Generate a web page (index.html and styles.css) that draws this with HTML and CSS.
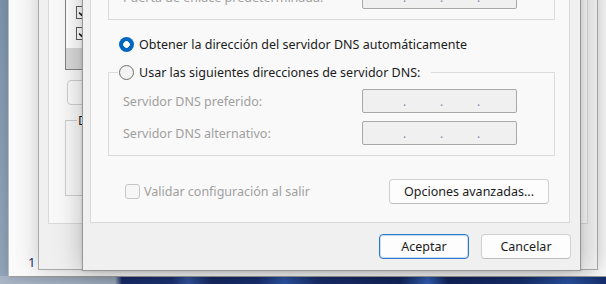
FILE: index.html
```html
<!DOCTYPE html>
<html lang="es">
<head>
<meta charset="utf-8">
<title>Propiedades</title>
<link rel="stylesheet" href="styles.css">
</head>
<body>
<div class="desktop">
  <div class="win win-back">
    <span class="page-num">1</span>
  </div>

  <div class="win win-mid">
    <div class="mid-tab">
      <div class="mid-list">
        <div class="mid-check"><svg width="11" height="11" viewBox="0 0 11 11"><path d="M2 5.5 L4.5 8 L9 2.5" fill="none" stroke="#1f1f1f" stroke-width="1.6"/></svg></div>
        <div class="mid-check"><svg width="11" height="11" viewBox="0 0 11 11"><path d="M2 5.5 L4.5 8 L9 2.5" fill="none" stroke="#1f1f1f" stroke-width="1.6"/></svg></div>
        <div class="mid-scroll"></div>
      </div>
      <div class="mid-btn"></div>
      <fieldset class="mid-group"><legend class="mid-legend">Descripción</legend></fieldset>
    </div>
  </div>

  <div class="win dialog">
    <div class="tabpage">
      <div class="group group-ip">
        <div class="field-row">
          <span class="label disabled">Puerta de enlace predeterminada:</span>
          <div class="ipbox"><span class="dot">.</span><span class="dot">.</span><span class="dot">.</span></div>
        </div>
      </div>

      <div class="radio-row">
        <span class="radio on"></span>
        <span class="radio-text">Obtener la dirección del servidor DNS automáticamente</span>
      </div>

      <fieldset class="group group-dns">
        <legend class="dns-legend">
          <span class="legend-inner">
            <span class="radio off"></span>
            <span class="radio-text">Usar las siguientes direcciones de servidor DNS:</span>
          </span>
        </legend>
        <div class="dns-rows">
          <div class="field-row">
            <span class="label disabled">Servidor DNS preferido:</span>
            <div class="ipbox"><span class="dot">.</span><span class="dot">.</span><span class="dot">.</span></div>
          </div>
          <div class="field-row">
            <span class="label disabled">Servidor DNS alternativo:</span>
            <div class="ipbox"><span class="dot">.</span><span class="dot">.</span><span class="dot">.</span></div>
          </div>
        </div>
      </fieldset>

      <div class="bottom-row">
        <span class="check"></span>
        <span class="label disabled">Validar configuración al salir</span>
        <button class="btn btn-adv" type="button">Opciones avanzadas...</button>
      </div>
    </div>

    <div class="dlg-buttons">
      <button class="btn btn-default" type="button">Aceptar</button>
      <button class="btn" type="button">Cancelar</button>
    </div>
  </div>
</div>
</body>
</html>
```

FILE: styles.css
```css
* {
  box-sizing: border-box;
}

html,
body {
  margin: 0;
  padding: 0;
}

body {
  width: 606px;
  height: 284px;
  overflow: hidden;
  font-family: "Noto Sans", "Open Sans", sans-serif;
  font-size: 12.5px;
  color: #1b1b1b;
}

.desktop {
  position: relative;
  width: 606px;
  height: 284px;
  overflow: hidden;
  background:
    linear-gradient(to right, #a9b6c6 0, #9fafc1 115px, #1a2e6c 122px, #1d3578 172px, #3556a3 188px, #172b66 212px, #1a3276 258px, #2f58ab 284px, #1a3070 318px, #142760 400px, #3463bb 428px, #13265f 448px, #183070 520px, #2b55a8 568px, #163070 606px) left bottom / 100% 8px no-repeat,
    linear-gradient(to bottom, #7e94ac, #93a6bb);
}

.win {
  position: absolute;
}

/* Back-most window */
.win-back {
  left: 8px;
  top: -20px;
  width: 640px;
  height: 297px;
  background: #fafafa;
  border-left: 1px solid #b4bec9;
  border-bottom: 1px solid #9c9c9c;
  display: flex;
  flex-direction: column;
  justify-content: flex-end;
  align-items: flex-start;
  padding: 0 0 7px 19px;
  box-shadow: 0 0 12px rgba(0, 0, 0, 0.18);
}

.page-num {
  font-size: 13px;
  line-height: 14px;
  color: #26306a;
}

/* Middle window */
.win-mid {
  left: 38px;
  top: -20px;
  width: 560px;
  height: 290px;
  background: #f0f0f0;
  border: 1px solid #a8a8a8;
  padding-left: 9px;
  box-shadow: 0 0 22px rgba(0, 0, 0, 0.2);
}

.mid-tab {
  width: 540px;
  height: 243px;
  border: 1px solid #dadada;
  background: #f9f9f9;
  padding-left: 16px;
  display: flex;
  flex-direction: column;
  align-items: flex-start;
}

.mid-list {
  width: 200px;
  height: 88px;
  border: 1px solid #828282;
  background: #ffffff;
  display: flex;
  flex-direction: column;
  padding: 23px 0 0 10px;
}

.mid-check {
  width: 13px;
  height: 13px;
  border: 1px solid #5c5c5c;
  background: #ffffff;
  margin-bottom: 8px;
  display: flex;
}

.mid-scroll {
  margin-top: auto;
  margin-left: -10px;
  height: 22px;
  width: 198px;
  background: #dadada;
}

.mid-btn {
  margin: 10px 0 0 2px;
  width: 100px;
  height: 25px;
  border: 1px solid #cfcfcf;
  border-radius: 4px;
  background: #fbfbfb;
}

.mid-group {
  margin: 7px 0 0 0;
  padding: 0;
  width: 300px;
  height: 84px;
  border: 1px solid #cdcdcd;
  min-width: 0;
}

.mid-legend {
  margin-left: 11px;
  padding: 0 1px;
  line-height: 17px;
  color: #1b1b1b;
}

/* Front dialog */
.dialog {
  left: 82px;
  top: -40px;
  width: 499px;
  height: 311px;
  background: #f0f0f0;
  border: 1px solid #979797;
  padding: 7px 10px 11px 7px;
  display: flex;
  flex-direction: column;
  box-shadow: 0 0 26px rgba(0, 0, 0, 0.26), 0 0 3px rgba(0, 0, 0, 0.12);
}

.tabpage {
  height: 255px;
  border: 1px solid #d9d9d9;
  background: #f9f9f9;
  padding: 0 14px 18px 17px;
  display: flex;
  flex-direction: column;
}

.group {
  border: 1px solid #dcdcdc;
}

.group-ip {
  height: 51px;
  padding: 15px 0 10px 14px;
}

.field-row {
  display: grid;
  grid-template-columns: 239px 155px;
  align-items: center;
  height: 24px;
}

.label {
  white-space: nowrap;
}

.disabled {
  color: #a0a0a0;
}

.ipbox {
  height: 24px;
  border: 1px solid #a8a8a8;
  border-radius: 2px;
  background: #f0f0f0;
  display: flex;
  align-items: center;
  padding-left: 40px;
  gap: 34px;
  color: #7c86a8;
  font-size: 12px;
}

.dot {
  width: 3px;
  overflow: visible;
}

.radio-row {
  display: flex;
  align-items: center;
  height: 20px;
  margin-top: 14px;
  padding-left: 11px;
  gap: 5px;
}

.radio {
  width: 15px;
  height: 15px;
  border-radius: 50%;
  flex: none;
}

.radio.on {
  background: radial-gradient(circle, #ffffff 0 3px, #0067c0 3.6px);
}

.radio.off {
  border: 1px solid #6f6f6f;
  background: #f3f3f3;
}

.radio-text {
  white-space: nowrap;
}

.group-dns {
  margin: 8px 0 0 0;
  padding: 0;
  min-width: 0;
}

.dns-legend {
  margin-left: 9px;
  padding: 0 11px 0 1px;
}

.legend-inner {
  display: flex;
  align-items: center;
  height: 20px;
  gap: 5px;
}

.dns-rows {
  display: flex;
  flex-direction: column;
  gap: 8px;
  padding: 7px 0 10px 14px;
}

.bottom-row {
  display: flex;
  align-items: center;
  height: 25px;
  margin: 23px 6px 0 17px;
}

.check {
  width: 15px;
  height: 15px;
  border: 1px solid #c6c6c6;
  border-radius: 3px;
  background: #f6f6f6;
  margin-right: 4px;
  flex: none;
}

.btn {
  height: 25px;
  width: 90px;
  padding: 0;
  border: 1px solid #d0d0d0;
  border-bottom-color: #bdbdbd;
  border-radius: 4px;
  background: #fdfdfd;
  font: inherit;
  color: #1b1b1b;
}

.btn-adv {
  margin-left: auto;
  width: 160px;
}

.btn-default {
  border: 1px solid #2a79cd;
  box-shadow: inset 0 0 0 1px rgba(42, 121, 205, 0.25);
}

.dlg-buttons {
  display: flex;
  justify-content: flex-end;
  gap: 12px;
  margin: 11px -1px 0 0;
}
```
